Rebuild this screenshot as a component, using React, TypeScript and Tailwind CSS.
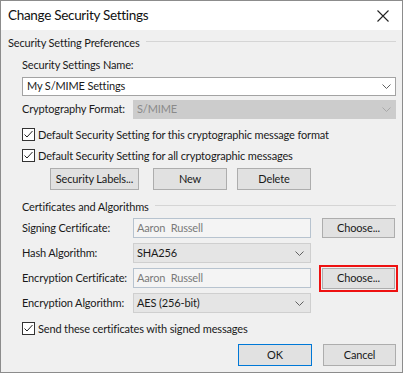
import React from 'react';

const font = { fontFamily: 'Lato, "Noto Sans", sans-serif' };

const Chevron = ({ color = '#606060' }: { color?: string }) => (
  <svg width="9" height="5" viewBox="0 0 9 5" className="shrink-0">
    <path d="M0.5 0.5 L4.5 4.5 L8.5 0.5" fill="none" stroke={color} strokeWidth="1" />
  </svg>
);

const Check = ({ label }: { label: string }) => (
  <div className="flex items-center h-[16px] gap-[3px]">
    <div className="w-[13px] h-[13px] border border-[#333333] bg-white flex items-center justify-center">
      <svg width="11" height="11" viewBox="0 0 11 11">
        <path d="M1.5 5.5 L4 8 L9.5 2" fill="none" stroke="#222222" strokeWidth="1" />
      </svg>
    </div>
    <span className="text-[11px] tracking-[-0.15px] text-[#1a1a1a] leading-none whitespace-nowrap">{label}</span>
  </div>
);

const Button = ({ label, className = '' }: { label: string; className?: string }) => (
  <div
    className={`h-[22px] bg-[#e1e1e1] border border-[#adadad] flex items-center justify-center text-[11px] tracking-[-0.15px] text-[#1a1a1a] whitespace-nowrap ${className}`}
  >
    {label}
  </div>
);

const GroupHeader = ({ label }: { label: string }) => (
  <div className="flex items-center h-[16px] gap-[6px]">
    <span className="text-[11px] tracking-[-0.15px] text-[#1a1a1a] whitespace-nowrap">{label}</span>
    <div className="flex-1 h-px bg-[#d5d5d5] -mt-[4px]" />
  </div>
);

const Label = ({ text }: { text: string }) => (
  <span className="w-[111px] shrink-0 text-[11px] tracking-[-0.15px] whitespace-nowrap">{text}</span>
);

export default function App() {
  return (
    <div className="w-[403px] h-[373px] bg-white border border-[#8c8c8c] flex flex-col overflow-hidden" style={font}>
      {/* title bar */}
      <div className="h-[29px] shrink-0 bg-white flex items-center justify-between pl-[7px] pr-[13px]">
        <span className="text-[13.5px] tracking-[-0.3px] text-[#111111]">Change Security Settings</span>
        <svg width="12" height="12" viewBox="0 0 12 12">
          <path d="M0.5 0.5 L11.5 11.5 M11.5 0.5 L0.5 11.5" stroke="#222222" strokeWidth="1.1" />
        </svg>
      </div>

      <div className="flex-1 bg-[#f0f0f0] flex flex-col pl-[7px] pr-[6px] text-[#1a1a1a]">
        <div className="mt-[5px]">
          <GroupHeader label="Security Setting Preferences" />
        </div>

        <div className="pl-[14px] flex flex-col">
          <div className="mt-[6px] h-[16px] flex items-center text-[11px] tracking-[-0.15px]">Security Settings Name:</div>

          <div className="mt-[4px] h-[19px] bg-white border border-[#a3a3a3] flex items-center justify-between pl-[4px] pr-[4px] text-[11px] tracking-[-0.15px]">
            <span>My S/MIME Settings</span>
            <Chevron />
          </div>

          <div className="mt-[4px] h-[19px] flex items-center">
            <Label text="Cryptography Format:" />
            <div className="flex-1 h-full bg-[#cccccc] border border-[#cccccc] flex items-center justify-between pl-[3px] pr-[4px] text-[11px] tracking-[-0.15px] text-[#8a8a8a]">
              <span>S/MIME</span>
              <Chevron color="#a8a8a8" />
            </div>
          </div>

          <div className="mt-[7px]">
            <Check label="Default Security Setting for this cryptographic message format" />
          </div>
          <div className="mt-[5px]">
            <Check label="Default Security Setting for all cryptographic messages" />
          </div>

          <div className="mt-[5px] flex pl-[28px] gap-[14px]">
            <Button label="Security Labels..." className="w-[89px]" />
            <Button label="New" className="w-[74px]" />
            <Button label="Delete" className="w-[74px] -ml-[4px]" />
          </div>

          <div className="mt-[9px]">
            <GroupHeader label="Certificates and Algorithms" />
          </div>

          <div className="mt-[3px] h-[20px] flex items-center">
            <Label text="Signing Certificate:" />
            <div className="w-[178px] h-full bg-[#f4f4f4] border border-[#b7c3cf] flex items-center pl-[3px] text-[11px] tracking-[-0.15px] text-[#7a7a7a]">
              Aaron&nbsp;&nbsp;Russell
            </div>
            <Button label="Choose..." className="ml-[11px] w-[73px] !h-[20px]" />
          </div>

          <div className="mt-[5px] h-[20px] flex items-center">
            <Label text="Hash Algorithm:" />
            <div className="w-[178px] h-full bg-[#e5e5e5] border border-[#cfcfcf] flex items-center justify-between pl-[3px] pr-[6px] text-[11px] tracking-[-0.15px]">
              <span>SHA256</span>
              <Chevron />
            </div>
          </div>

          <div className="mt-[5px] h-[20px] flex items-center">
            <Label text="Encryption Certificate:" />
            <div className="w-[178px] h-full bg-[#f4f4f4] border border-[#b7c3cf] flex items-center pl-[3px] text-[11px] tracking-[-0.15px] text-[#7a7a7a]">
              Aaron&nbsp;&nbsp;Russell
            </div>
            <div className="relative ml-[11px]">
              <Button label="Choose..." className="w-[73px] !h-[21px]" />
              <div className="absolute -inset-[3px] border-2 border-[#ee1111]" />
            </div>
          </div>

          <div className="mt-[5px] h-[20px] flex items-center">
            <Label text="Encryption Algorithm:" />
            <div className="w-[178px] h-full bg-[#e5e5e5] border border-[#cfcfcf] flex items-center justify-between pl-[3px] pr-[6px] text-[11px] tracking-[-0.15px]">
              <span>AES (256-bit)</span>
              <Chevron />
            </div>
          </div>

          <div className="mt-[7px]">
            <Check label="Send these certificates with signed messages" />
          </div>

          <div className="mt-[8px] flex justify-end gap-[11px]">
            <Button label="OK" className="w-[74px] !border-[#0078d7]" />
            <Button label="Cancel" className="w-[73px]" />
          </div>
        </div>
      </div>
    </div>
  );
}
